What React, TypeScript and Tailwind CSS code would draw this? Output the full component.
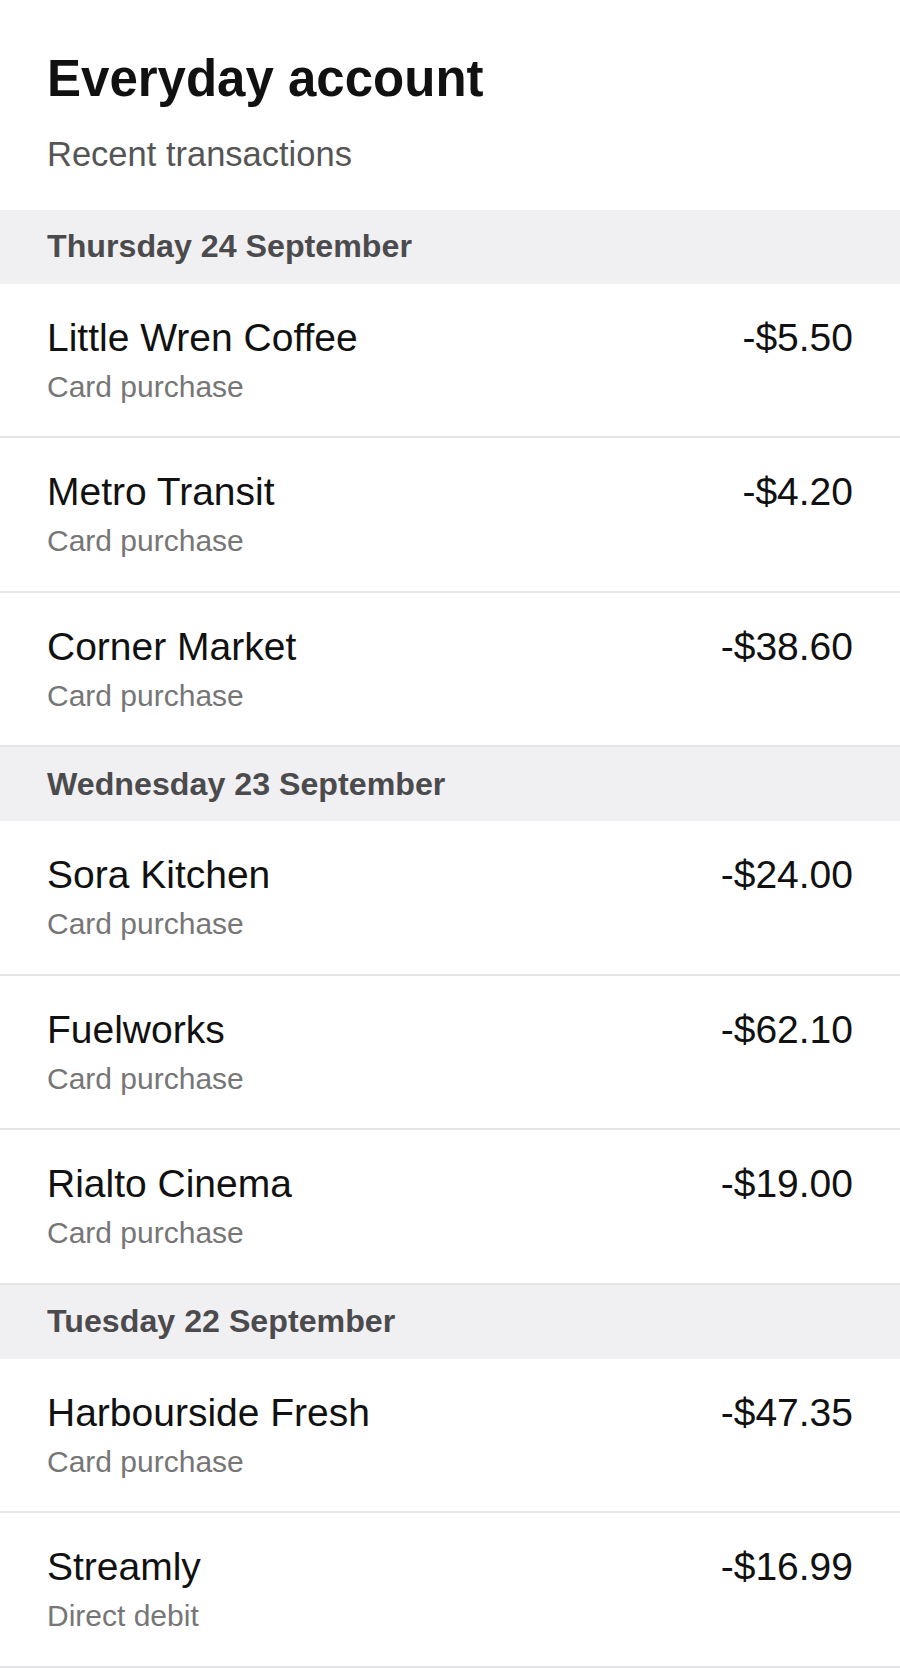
const GROUPS = [
  {
    date: "Thursday 24 September",
    items: [
      { name: "Little Wren Coffee", kind: "Card purchase", amount: "-$5.50" },
      { name: "Metro Transit", kind: "Card purchase", amount: "-$4.20" },
      { name: "Corner Market", kind: "Card purchase", amount: "-$38.60" },
    ],
  },
  {
    date: "Wednesday 23 September",
    items: [
      { name: "Sora Kitchen", kind: "Card purchase", amount: "-$24.00" },
      { name: "Fuelworks", kind: "Card purchase", amount: "-$62.10" },
      { name: "Rialto Cinema", kind: "Card purchase", amount: "-$19.00" },
    ],
  },
  {
    date: "Tuesday 22 September",
    items: [
      { name: "Harbourside Fresh", kind: "Card purchase", amount: "-$47.35" },
      { name: "Streamly", kind: "Direct debit", amount: "-$16.99" },
    ],
  },
];

export default function App() {
  return (
    <main className="min-h-screen bg-white font-['Liberation_Sans',Arial,sans-serif]">
      {/* Header */}
      <header className="px-[47px] pt-[53px] pb-[38px]">
        <h1 className="text-[51px] font-bold leading-none text-[#111111]">
          Everyday account
        </h1>
        <p className="mt-[33px] text-[34.5px] leading-none text-[#555555]">
          Recent transactions
        </p>
      </header>

      {/* Transaction groups */}
      {GROUPS.map((group) => (
        <section key={group.date}>
          <div className="flex h-[74px] items-center bg-[#f0f0f2] px-[47px]">
            <h2 className="text-[32.2px] font-bold leading-none text-[#4b4b4d]">
              {group.date}
            </h2>
          </div>
          <ul>
            {group.items.map((tx) => (
              <li
                key={tx.name}
                className="flex items-start justify-between border-b-2 border-[#e6e6e9] px-[47px] pt-[34px] pb-[34.5px]"
              >
                <div>
                  <p className="text-[39px] leading-none text-[#111111]">
                    {tx.name}
                  </p>
                  <p className="mt-[15px] text-[30px] leading-none text-[#767676]">
                    {tx.kind}
                  </p>
                </div>
                <p className="text-[39px] leading-none text-[#111111]">
                  {tx.amount}
                </p>
              </li>
            ))}
          </ul>
        </section>
      ))}
    </main>
  );
}
